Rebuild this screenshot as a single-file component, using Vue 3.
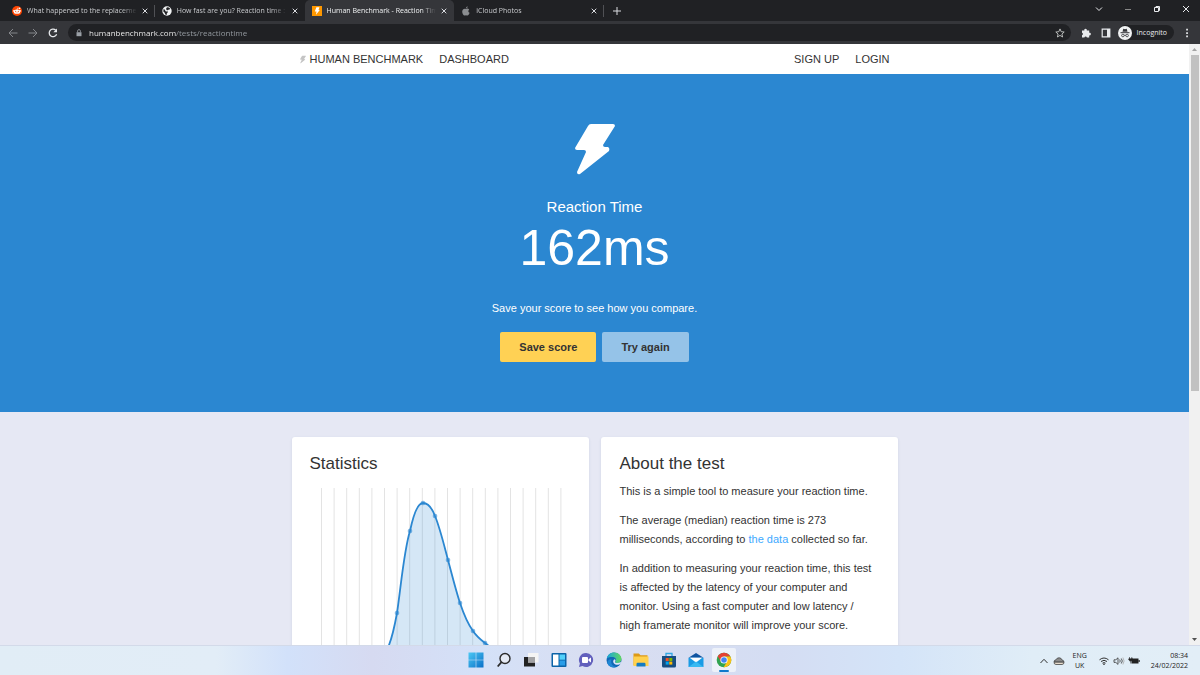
<script setup>
import { ref } from 'vue'

const address = ref('humanbenchmark.com/tests/reactiontime')

const tabs = [
  { title: 'What happened to the replacement', icon: 'reddit' },
  { title: 'How fast are you? Reaction time : test', icon: 'globe' },
  { title: 'Human Benchmark - Reaction Time', icon: 'bolt', active: true },
  { title: 'iCloud Photos', icon: 'apple' },
]

const gridLines = Array.from({ length: 20 }, (_, i) => 11.5 + i * 12.6)

const points = [
  [74, 167], [87, 125], [100, 43], [113, 15], [125, 28],
  [138, 72], [150, 115], [163, 143], [175, 155],
]

const curve =
  'M61 186C68 184 75 169 79 157C83 147 85 136 87 125C91 98 94 62 100 43C104 24 108 15 113 15' +
  'C118 15 122 20 125 28C130 40 134 57 138 72C142 87 146 103 150 115C154 127 158 136 163 143' +
  'C167 149 171 152 175 155C182 161 200 172 250 180'

const boltPath =
  'M16 0h22q2 0 2 2l-12 19q0 2 2 2h3q2 1 1 4L5 50q-3 1-3-2l9-20q0-2-2-2H2q-2 0-2-2L13 2q1-2 3-2z'
</script>

<template>
  <div class="desktop">
    <header class="tabbar">
      <div class="tabs">
        <div v-for="tab in tabs" :key="tab.title" class="tab" :class="{ active: tab.active }">
          <svg v-if="tab.icon === 'reddit'" class="fav" viewBox="0 0 10 10">
            <circle cx="5" cy="5" r="5" fill="#ff4500" />
            <circle cx="7.6" cy="2.4" r=".8" fill="#fff" />
            <path d="M5 4l.5-2 2 .4" fill="none" stroke="#fff" stroke-width=".5" />
            <ellipse cx="5" cy="5.8" rx="3.2" ry="2.2" fill="#fff" />
            <circle cx="1.9" cy="4.9" r=".8" fill="#fff" />
            <circle cx="8.1" cy="4.9" r=".8" fill="#fff" />
            <circle cx="3.7" cy="5.3" r=".6" fill="#ff4500" />
            <circle cx="6.3" cy="5.3" r=".6" fill="#ff4500" />
            <path d="M3.7 6.8q1.3.8 2.6 0" fill="none" stroke="#ff4500" stroke-width=".4" />
          </svg>
          <svg v-else-if="tab.icon === 'globe'" class="fav" viewBox="0 0 10 10">
            <circle cx="5" cy="5" r="4.7" fill="#f1f3f4" />
            <path d="M1.4 3.2Q3 3 3.2 4.4t2 .8q1.300 .4.3 1.500-1 .5-.8 2-1 .6-1.500-.8Q2.700 6.300 1.400 5.800zM5 1.300q1.800-.2 3 1.200.2 1-1 .9-.8 0-.9.700-.9.400-1.700-.4Q3.600 2.500 5 1.300z" fill="#202124" />
          </svg>
          <svg v-else-if="tab.icon === 'bolt'" class="fav" viewBox="0 0 10 10">
            <path d="M0 0h10v10H0z" fill="#ff9800" />
            <path d="M4.400 1.200h3L6.500 3.900h1.300L4 8.800l.5-3.300H2.800z" fill="#fff" />
          </svg>
          <svg v-else class="fav" viewBox="0 0 10 10">
            <path d="M5 3c.8-.5 2-.8 3.200.4-1.400 1-1 2.900.4 3.400C8 8.500 7.200 9.500 6.500 9.500S5.500 9.200 5 9.200s-.9.300-1.500.3C2.400 9.500 1.200 7.400 1.200 5.700 1.200 3.300 3.300 2.200 5 3zM4.900 2.500Q5 .7 6.700.3 6.800 2.100 4.900 2.500z" fill="#8b8d90" />
          </svg>
          <span class="tab-title">{{ tab.title }}</span>
          <button class="tab-close" aria-label="Close tab">
            <svg viewBox="0 0 6 6"><path d="M.7.7l4.600 4.600M5.300.7L.7 5.300" /></svg>
          </button>
        </div>
      </div>
      <button class="new-tab" aria-label="New tab">
        <svg viewBox="0 0 8 8"><path d="M4 0v8M0 4h8" /></svg>
      </button>
      <div class="window-controls">
        <button aria-label="Search tabs"><svg viewBox="0 0 8 8"><path d="M1 2.500l3 3 3-3" /></svg></button>
        <button aria-label="Minimise"><svg viewBox="0 0 8 8"><path d="M1 4.500h6" stroke="#888" /></svg></button>
        <button aria-label="Restore"><svg viewBox="0 0 8 8"><path d="M1.500 2.500h4v4h-4zM3 2.500v-1h3.500v4h-1" /></svg></button>
        <button aria-label="Close"><svg viewBox="0 0 8 8"><path d="M1 1l6 6M7 1L1 7" /></svg></button>
      </div>
    </header>

    <div class="toolbar">
      <button aria-label="Back"><svg class="dim" viewBox="0 0 10 10"><path d="M9.500 5H1M5 1L1 5l4 4" /></svg></button>
      <button aria-label="Forward"><svg class="dim" viewBox="0 0 10 10"><path d="M.5 5H9M5 1l4 4-4 4" /></svg></button>
      <button aria-label="Reload">
        <svg viewBox="0 0 10 10"><path d="M8.600 6.200A3.800 3.800 0 1 1 7.700 2.200" stroke-width="1.300" /><path d="M9 .5v3.700H5.300z" fill="#e8eaed" stroke="none" /></svg>
      </button>
      <div class="omnibox">
        <svg class="lock" viewBox="0 0 6 8"><path d="M.5 3.200h5v4h-5z" fill="#9aa0a6" /><path d="M1.600 3.200V2a1.400 1.400 0 0 1 2.800 0v1.200" fill="none" stroke="#9aa0a6" stroke-width=".8" /></svg>
        <input v-model="address" class="url" type="text" aria-label="Address" spellcheck="false" />
        <button aria-label="Bookmark this tab">
          <svg viewBox="0 0 10 10"><path d="M5 .9l1.200 2.800 3 .3-2.300 2 .7 3L5 7.400 2.400 9l.7-3L.8 4l3-.3z" stroke="#c4c7c5" stroke-width=".9" /></svg>
        </button>
      </div>
      <button aria-label="Extensions">
        <svg viewBox="0 0 10 10"><path d="M1 2.500h2.300a1.300 1.300 0 1 1 2.500 0h2.400v2.300a1.300 1.300 0 1 1 0 2.500v2.200H5.900a1.300 1.300 0 0 0-2.500 0H1V7.200a1.300 1.300 0 0 0 0-2.500z" fill="#e8eaed" stroke="none" /></svg>
      </button>
      <button aria-label="Side panel">
        <svg viewBox="0 0 10 10"><path d="M1.200 1.200h7.600v7.600H1.200z" stroke-width="1.200" /><path d="M6 1h3v8H6z" fill="#e8eaed" stroke="none" /></svg>
      </button>
      <button class="incognito">
        <svg viewBox="0 0 14 14">
          <circle cx="7" cy="7" r="7" fill="#f1f3f4" stroke="none" />
          <path d="M4.500 5.800l.8-3 1.700.4 1.700-.4.8 3z" fill="#35363a" stroke="none" />
          <path d="M2.500 6.700h9" stroke="#35363a" />
          <circle cx="4.900" cy="9.500" r="1.300" stroke="#35363a" stroke-width=".8" />
          <circle cx="9.100" cy="9.500" r="1.300" stroke="#35363a" stroke-width=".8" />
          <path d="M6.200 9.300h1.600" stroke="#35363a" stroke-width=".8" />
        </svg>
        Incognito
      </button>
      <button aria-label="Menu">
        <svg viewBox="0 0 10 10"><path d="M4.200.8h1.700v1.700H4.200zM4.200 4.200h1.700v1.700H4.200zM4.200 7.600h1.700v1.700H4.200z" fill="#e8eaed" stroke="none" /></svg>
      </button>
    </div>

    <div class="viewport">
      <main class="page">
        <nav class="site-nav">
          <div class="container nav-inner">
            <a href="#" class="brand"><svg viewBox="0 0 40 51"><path :d="boltPath" /></svg>HUMAN BENCHMARK</a>
            <a href="#">DASHBOARD</a>
            <a href="#" class="push">SIGN UP</a>
            <a href="#">LOGIN</a>
          </div>
        </nav>

        <section class="hero">
          <svg class="hero-bolt" viewBox="0 0 40 51"><path :d="boltPath" /></svg>
          <h1>Reaction Time</h1>
          <div class="score">162ms</div>
          <p>Save your score to see how you compare.</p>
          <div class="actions">
            <button class="save">Save score</button>
            <button class="again">Try again</button>
          </div>
        </section>

        <div class="container cards">
          <section class="card">
            <h2>Statistics</h2>
            <svg class="chart" viewBox="0 0 261 190">
              <path v-for="x in gridLines" :key="x" :d="`M${x} 0V190`" stroke="#e3e3e3" />
              <path :d="curve + 'V190H61z'" fill="#2b87d1" fill-opacity=".2" />
              <path :d="curve" fill="none" stroke="#2b87d1" stroke-width="1.800" />
              <circle v-for="p in points" :key="p[0]" :cx="p[0]" :cy="p[1]" r="2" fill="#2b87d1" fill-opacity=".6" stroke="#2b87d1" stroke-opacity=".5" stroke-width=".6" />
            </svg>
          </section>
          <section class="card about">
            <h2>About the test</h2>
            <p>This is a simple tool to measure your reaction time.</p>
            <p>The average (median) reaction time is 273 milliseconds, according to <a href="#">the data</a> collected so far.</p>
            <p>In addition to measuring your reaction time, this test is affected by the latency of your computer and monitor. Using a fast computer and low latency / high framerate monitor will improve your score.</p>
          </section>
        </div>
      </main>
      <div class="scrollbar">
        <svg viewBox="0 0 11 11"><path d="M3 7l2.500-3L8 7z" fill="#a3a3a3" /></svg>
        <div class="track"><div class="thumb"></div></div>
        <svg viewBox="0 0 11 11"><path d="M3 4l2.500 3L8 4z" fill="#505050" /></svg>
      </div>
    </div>

    <footer class="taskbar">
      <div class="apps">
        <button aria-label="Start">
          <svg viewBox="0 0 16 16"><defs><linearGradient id="win" x2="1" y2="1"><stop stop-color="#4cc8f4" /><stop offset="1" stop-color="#0a70c8" /></linearGradient></defs><path d="M.5.5h7.200v7.200H.5zM8.300.5h7.200v7.200H8.300zM.5 8.300h7.200v7.200H.5zM8.300 8.300h7.200v7.200H8.300z" fill="url(#win)" /></svg>
        </button>
        <button aria-label="Search">
          <svg viewBox="0 0 16 16" fill="none" stroke="#2b2b2b"><circle cx="9" cy="6.500" r="5" stroke-width="1.400" fill="#e6ebf5" /><path d="M5.500 10.200L1.700 14.500" stroke-width="1.800" /></svg>
        </button>
        <button aria-label="Task view">
          <svg viewBox="0 0 16 16"><path d="M1 5h11v9.500H1z" fill="#222" /><path d="M5 1h10.500v9.500H5z" fill="#f4f4f4" /><path d="M5 5h7v5.500H5z" fill="#a2a2a4" /></svg>
        </button>
        <button aria-label="Widgets">
          <svg viewBox="0 0 16 16"><rect x=".5" y="1" width="15" height="14" rx="1" fill="#0b63a8" /><path d="M2 2.500h5.500v11H2z" fill="#fff" /><path d="M8.500 2.500H14v5.200H8.500z" fill="#50d0fa" /><path d="M8.500 8.500H14v5H8.500z" fill="#299de8" /></svg>
        </button>
        <button aria-label="Chat">
          <svg viewBox="0 0 16 16"><path d="M8 1a7 7 0 1 1-3.500 13L1 15l.9-3.500A7 7 0 0 1 8 1z" fill="#6260bd" /><rect x="4" y="5" width="6" height="6" rx="1" fill="#fff" /><path d="M10.500 7.200L13 5.500v5l-2.500-1.700z" fill="#fff" /></svg>
        </button>
        <button aria-label="Edge">
          <svg viewBox="0 0 16 16"><defs><linearGradient id="edge" x2="1"><stop stop-color="#1aa5dc" /><stop offset="1" stop-color="#62d85f" /></linearGradient></defs><circle cx="8" cy="8" r="7.500" fill="#1268b5" /><path d="M.7 6.800C1.600 2.500 4.700.5 8 .5c5 0 7.500 3.600 7.500 6.500 0 2.300-1.700 4-4 4-2 0-3-.8-2-1.800 1.500-1.800-.2-4.200-3.200-4.200S1.200 5.500.7 6.800z" fill="url(#edge)" /><path d="M9.300 9.200c-1 1 0 1.800 2.200 1.800 1.200 0 2.200-.4 2.900-1.100l1 1c-1.200 1.600-5.200 2.800-7.400.6C6.700 10 7 8 8.500 7.200c1.100.3 1.200 1.200.8 2z" fill="#dde5f6" /><path d="M5.500 7.200c-1.200 3 .3 7.300 5 7.900-3.500 1.200-7.800-.4-9.100-3.700C.8 9.200 3 7.100 5.500 7.200z" fill="#2087d4" /></svg>
        </button>
        <button aria-label="File Explorer">
          <svg viewBox="0 0 16 16"><path d="M.5 1.500h5.300L7.500 3.300h7v10H.5z" fill="#dd9a17" /><path d="M.5 4.500h15V14H.5z" fill="#ffd14e" /><path d="M3.500 14.500V12q0-1.200 1.200-1.200h6.600q1.200 0 1.200 1.200v2.500z" fill="#147cc2" /></svg>
        </button>
        <button aria-label="Microsoft Store">
          <svg viewBox="0 0 16 16"><path d="M5 4V1.500h6V4" fill="none" stroke="#30a8e4" stroke-width="1.300" /><path d="M1 4h14v10q0 1.500-1.500 1.500h-11Q1 15.500 1 14z" fill="#174d82" /><path d="M4.700 6h3v3h-3z" fill="#f25022" /><path d="M8.300 6h3v3h-3z" fill="#7fba00" /><path d="M4.700 9.600h3v3h-3z" fill="#00a4ef" /><path d="M8.300 9.600h3v3h-3z" fill="#ffb900" /></svg>
        </button>
        <button aria-label="Mail">
          <svg viewBox="0 0 16 16"><path d="M.5 5.800L8 1l7.500 4.800z" fill="#1054a0" /><path d="M.5 5.800h15V15H.5z" fill="#1a9be5" /><path d="M1.700 5.800h12.600L8 10.500z" fill="#fff" /><path d="M.5 15L8 9.500l7.500 5.500z" fill="#38b9f2" /></svg>
        </button>
        <button class="running" aria-label="Chrome">
          <svg viewBox="0 0 16 16"><circle cx="8" cy="8" r="7.300" fill="#31a350" /><path d="M1.700 4.300A7.300 7.300 0 0 1 14.300 4.400H8L5 9.800z" fill="#e34133" /><path d="M14.300 4.400A7.300 7.300 0 0 1 7.600 15.300L11 9.800 8 4.400z" fill="#fbc116" /><circle cx="8" cy="8" r="3.600" fill="#fff" /><circle cx="8" cy="8" r="2.800" fill="#4285f4" /></svg>
        </button>
      </div>
      <div class="tray">
        <svg viewBox="0 0 12 10"><path d="M2.500 7L6 3.300 9.500 7" fill="none" stroke="#333" /></svg>
        <svg viewBox="0 0 12 10"><path d="M1 6q0-2 2-2.200Q4 1.500 6.300 1.800 8.500 2 9 4q2 .3 2 2.200z" fill="#8b8b8b" stroke="#444" stroke-width=".8" /><path d="M1 6.200h10Q11 8.500 9 8.500H3Q1 8.500 1 6.200z" fill="#e8dccd" stroke="#444" stroke-width=".8" /></svg>
        <div class="lang"><span>ENG</span><span>UK</span></div>
        <svg viewBox="0 0 12 10"><path d="M1.500 3.800q4.500-3.600 9 0M3 5.500q3-2.400 6 0M4.500 7.200q1.500-1.200 3 0" fill="none" stroke="#333" /><circle cx="6" cy="8.300" r=".8" fill="#222" /></svg>
        <svg viewBox="0 0 12 10"><path d="M1 3.800h1.800L5 1.800v6.600L2.800 6.400H1z" fill="none" stroke="#333" stroke-width=".8" /><path d="M6.700 3.500q1 1.500 0 3M8.300 2.500q2 2.500 0 5" fill="none" stroke="#333" stroke-width=".8" /><path d="M9.900 1.500q2.400 3.500 0 7" fill="none" stroke="#aaa" stroke-width=".8" /></svg>
        <svg viewBox="0 0 12 10"><path d="M3.500 2.500h7v5h-7z" fill="#222" /><path d="M10.500 4h1.200v2h-1.200z" fill="#222" /><path d="M1.500 1v2M3.800 1v2M.8 2.800h3.600v1.200Q4 5 2.700 5T.8 4zM2.700 5v2.500" fill="#222" stroke="#222" stroke-width=".6" /></svg>
        <div class="clock"><span>08:34</span><span>24/02/2022</span></div>
      </div>
    </footer>
  </div>
</template>

<style>
body {
  margin: 0;
}
</style>

<style scoped>
* {
  box-sizing: border-box;
}
.desktop {
  display: flex;
  flex-direction: column;
  height: 100vh;
  overflow: hidden;
  font-family: "Liberation Sans", Arial, sans-serif;
}
button {
  border: 0;
  padding: 0;
  background: none;
  font: inherit;
  color: inherit;
}
svg {
  display: block;
  flex: none;
}
a {
  color: inherit;
  text-decoration: none;
}

.tabbar {
  display: flex;
  flex: none;
  height: 21px;
  background: #202124;
  color: #c8cacd;
  padding-left: 5px;
  font-family: "Open Sans", "Noto Sans", sans-serif;
  font-size: 7px;
}
.tabs {
  display: flex;
  flex: 0 1 599px;
  min-width: 0;
}
.tab {
  display: flex;
  flex: 1;
  align-items: center;
  gap: 5px;
  min-width: 0;
  padding: 0 7px;
  border-radius: 5px 5px 0 0;
}
.tab:first-child,
.tab:last-child {
  background: linear-gradient(#505155, #505155) right 5px / 1px 12px no-repeat;
}
.tab.active {
  background: #35363a;
  color: #f1f3f4;
}
.fav {
  width: 10px;
  height: 10px;
}
.tab-title {
  flex: 1;
  overflow: hidden;
  white-space: nowrap;
  line-height: 20px;
  mask-image: linear-gradient(90deg, #000 86%, transparent);
}
.tab-close {
  width: 6px;
}
.tab-close svg {
  width: 6px;
  height: 6px;
  stroke: #dadce0;
}
.new-tab {
  width: 26px;
  display: grid;
  place-items: center;
}
.new-tab svg {
  width: 8px;
  height: 8px;
  stroke: #dadce0;
}
.window-controls {
  display: flex;
  gap: 1px;
  margin-left: auto;
}
.window-controls button {
  display: grid;
  place-items: center;
  width: 28px;
  height: 18px;
}
.window-controls svg {
  width: 8px;
  height: 8px;
  fill: none;
  stroke: #e8eaed;
}

.toolbar {
  display: flex;
  flex: none;
  align-items: center;
  gap: 10px;
  height: 23px;
  padding: 0 8px;
  background: #35363a;
  color: #e8eaed;
  font-family: "Open Sans", "Noto Sans", sans-serif;
}
.toolbar svg {
  width: 10px;
  height: 10px;
  fill: none;
  stroke: #e8eaed;
}
.toolbar svg.dim {
  stroke: #85878b;
}
.omnibox {
  display: flex;
  flex: 1;
  align-items: center;
  height: 17px;
  padding: 0 6px 0 8px;
  border-radius: 9px;
  background: #202124;
}
.omnibox .lock {
  width: 6px;
  height: 8px;
  stroke: none;
}
.url {
  flex: 1;
  min-width: 0;
  height: 17px;
  margin: 0 0 0 7px;
  padding: 0;
  border: 0;
  outline: 0;
  background: linear-gradient(90deg, #fff 87px, #9aa0a6 87px);
  background-clip: text;
  color: transparent;
  font: 8px/17px "Open Sans", "Noto Sans", sans-serif;
}
.incognito {
  display: flex;
  align-items: center;
  gap: 5px;
  height: 15px;
  margin: 0 -2px 0 -3px;
  padding-right: 7px;
  border-radius: 8px;
  background: #202124;
  font-size: 7px;
}
.toolbar .incognito svg {
  width: 14px;
  height: 14px;
}

.viewport {
  display: flex;
  flex: 1;
  min-height: 0;
}
.page {
  flex: 1;
  min-width: 0;
  overflow: hidden;
  background: #e6e8f4;
  color: #333;
}
.container {
  width: 100%;
  max-width: 606px;
  margin: 0 auto;
}
.site-nav {
  background: #fff;
}
.nav-inner {
  display: flex;
  align-items: center;
  gap: 16px;
  height: 30px;
  padding: 0 8px;
  font-size: 11px;
}
.brand {
  display: flex;
  align-items: center;
  gap: 4px;
}
.brand svg {
  width: 6px;
  height: 9px;
  fill: #c4c4c4;
}
.push {
  margin-left: auto;
}

.hero {
  display: flex;
  flex-direction: column;
  align-items: center;
  padding: 50px 0;
  background: #2b87d1;
  color: #fff;
}
.hero-bolt {
  width: 40px;
  height: 51px;
  fill: #fff;
}
.hero h1 {
  margin: 21px 0 0;
  font-size: 15px;
  font-weight: 400;
  line-height: 22px;
}
.score {
  font-size: 50px;
  line-height: 60px;
}
.hero p {
  margin: 21px 0 0;
  font-size: 11px;
  line-height: 18px;
}
.actions {
  display: flex;
  gap: 6px;
  margin-top: 15px;
}
.actions button {
  height: 30px;
  padding: 0 19px;
  border-radius: 2px;
  color: #333;
  font-size: 11px;
  font-weight: 700;
}
.save {
  background: #ffd154;
}
.again {
  background: #95c3e8;
}

.cards {
  display: grid;
  grid-template-columns: 1fr 1fr;
  gap: 12px;
  padding-top: 25px;
}
.card {
  padding: 17px 18px;
  border-radius: 3px;
  background: #fff;
  box-shadow: 0 1px 3px rgba(60, 70, 120, 0.12);
}
.about {
  padding-left: 19px;
  padding-right: 24px;
}
.card h2 {
  margin: 0;
  font-size: 17px;
  font-weight: 400;
  line-height: 20px;
}
.card p {
  margin: 8px 0 10px;
  font-size: 11px;
  line-height: 19px;
}
.card p a {
  color: #40a9ff;
}
.chart {
  width: 100%;
  margin-top: 14px;
}

.scrollbar {
  display: flex;
  flex-direction: column;
  width: 11px;
  background: #f1f1f1;
}
.scrollbar svg {
  width: 11px;
  height: 11px;
}
.track {
  flex: 1;
  padding: 0 1px 0 2px;
}
.thumb {
  height: 58%;
  background: #c1c1c1;
}

.taskbar {
  position: relative;
  display: flex;
  flex: none;
  align-items: center;
  justify-content: center;
  height: 30px;
  border-top: 1px solid #d3dae9;
  background: linear-gradient(90deg, #e1edf6 0%, #e2edf7 18%, #d2e1fa 24%, #d6daf1 31%, #d4e1f8 40%, #d9def1 50%, #d4ddf3 65%, #d4e4f8 75%, #e0edf7 86%, #e2eef7 100%);
}
.apps {
  display: grid;
  grid-template-columns: repeat(10, 1fr);
  width: 275px;
  margin-bottom: 1px;
}
.apps button {
  position: relative;
  display: grid;
  place-items: center;
  height: 24px;
  margin: 0 2px;
  border-radius: 2px;
}
.apps svg {
  width: 16px;
  height: 16px;
}
.running {
  background: #edf1f9;
}
.running::after {
  content: "";
  position: absolute;
  bottom: 0;
  left: 7px;
  right: 7px;
  height: 2px;
  border-radius: 1px;
  background: #0f79cc;
}
.tray {
  position: absolute;
  right: 12px;
  top: 0;
  display: flex;
  align-items: center;
  gap: 3px;
  height: 29px;
  color: #222;
  font: 7px/10px "Open Sans", "Noto Sans", sans-serif;
}
.tray svg {
  width: 12px;
  height: 10px;
}
.lang,
.clock {
  display: flex;
  flex-direction: column;
}
.lang {
  align-items: center;
  margin: 0 8px 0 5px;
}
.clock {
  align-items: flex-end;
  margin-left: 8px;
}
</style>
